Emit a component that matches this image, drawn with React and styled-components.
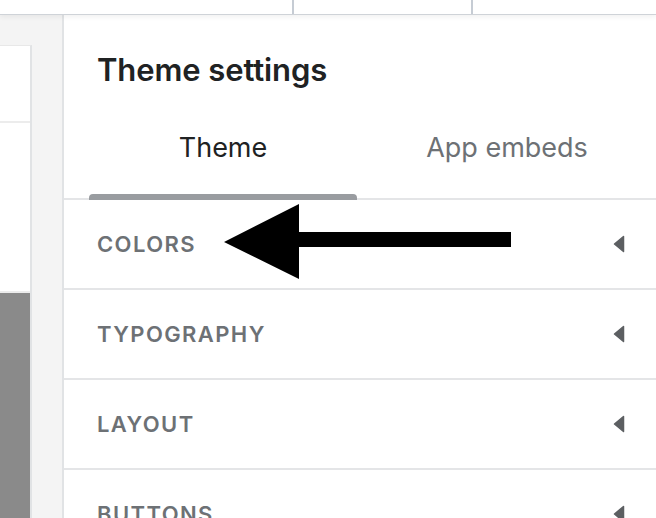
import React from 'react';
import styled, { createGlobalStyle } from 'styled-components';

const GlobalStyle = createGlobalStyle`
  html, body {
    margin: 0;
    padding: 0;
    background: #ffffff;
    overflow: hidden;
  }
  body {
    font-family: Inter, "Noto Sans", "Liberation Sans", sans-serif;
    -webkit-font-smoothing: antialiased;
  }
`;

// whole screen
const Page = styled.div`
  width: 656px;
  height: 518px;
  display: flex;
  flex-direction: column;
  overflow: hidden;
`;

// the strip of the top bar that is still visible
const TopBar = styled.div`
  height: 14px;
  flex-shrink: 0;
  display: flex;
  background: #ffffff;
  border-bottom: 1px solid #cfd3d8;
  box-shadow: 0 2px 5px rgba(0, 0, 0, 0.06);
  position: relative;
  z-index: 1;
`;

const TopSegment = styled.div`
  width: ${p => p.$width ? `${p.$width}px` : 'auto'};
  flex: ${p => p.$width ? '0 0 auto' : '1'};
  border-right: ${p => p.$divider ? '2px solid #c6ccd4' : 'none'};
`;

const Main = styled.div`
  flex: 1;
  display: flex;
  min-height: 0;
`;

// preview area on the left, mostly cut off
const LeftRail = styled.div`
  width: 62px;
  flex-shrink: 0;
  background: #f4f4f4;
  border-right: 2px solid #e1e3e5;
  padding-top: 30px;
  display: flex;
`;

const PreviewCard = styled.div`
  width: 30px;
  display: flex;
  flex-direction: column;
  background: #ffffff;
  border-top: 1px solid #e8e8e8;
  border-right: 2px solid #e1e3e5;
`;

const CardHeader = styled.div`
  height: 75px;
  border-bottom: 2px solid #ececec;
`;

const CardBody = styled.div`
  height: 168px;
  border-bottom: 2px solid #ececec;
`;

const CardImage = styled.div`
  flex: 1;
  background: #8a8a8a;
`;

// settings panel
const Panel = styled.div`
  flex: 1;
  position: relative;
  background: #ffffff;
  display: flex;
  flex-direction: column;
`;

const Title = styled.h2`
  margin: 0;
  padding: 36px 0 0 33px;
  font-size: 31px;
  line-height: 37px;
  font-weight: 600;
  color: #202223;
  letter-spacing: -0.1px;
`;

const Tabs = styled.div`
  display: flex;
  gap: 16px;
  padding: 0 16px 0 25px;
  margin-top: 39px;
  border-bottom: 2px solid #e4e5e7;
`;

const Tab = styled.div`
  width: 268px;
  height: 71px;
  position: relative;
  display: flex;
  justify-content: center;
  padding-top: 5px;
  box-sizing: border-box;
  font-size: 27px;
  line-height: 32px;
  color: ${p => p.$active ? '#202223' : '#6d7175'};

  &::after {
    content: '';
    display: ${p => p.$active ? 'block' : 'none'};
    position: absolute;
    left: 0;
    right: 0;
    bottom: -2px;
    height: 6px;
    border-radius: 4px 4px 0 0;
    background: #999ca0;
  }
`;

const Section = styled.div`
  height: 88px;
  flex-shrink: 0;
  display: flex;
  align-items: center;
  justify-content: space-between;
  padding: 0 32px 0 33px;
  border-bottom: 2px solid #e4e5e7;
`;

const SectionLabel = styled.span`
  font-size: 22px;
  font-weight: 600;
  letter-spacing: 1.4px;
  color: #6d7175;
`;

const Caret = styled.svg`
  width: 12px;
  height: 18px;
  display: block;
`;

// annotation drawn over the panel
const Pointer = styled.svg`
  position: absolute;
  left: 160px;
  top: 189px;
  width: 288px;
  height: 76px;
`;

const sections = ['COLORS', 'TYPOGRAPHY', 'LAYOUT', 'BUTTONS'];

function App() {
  return (
    <>
      <GlobalStyle />
      <Page>
        <TopBar>
          <TopSegment $width={292} $divider />
          <TopSegment $width={177} $divider />
          <TopSegment />
        </TopBar>
        <Main>
          <LeftRail>
            <PreviewCard>
              <CardHeader />
              <CardBody />
              <CardImage />
            </PreviewCard>
          </LeftRail>
          <Panel>
            <Title>Theme settings</Title>
            <Tabs>
              <Tab $active>Theme</Tab>
              <Tab>App embeds</Tab>
            </Tabs>
            {sections.map(name => (
              <Section key={name}>
                <SectionLabel>{name}</SectionLabel>
                <Caret viewBox="0 0 12 18">
                  <path d="M10.5 1.5 L1.5 9 L10.5 16.5 Z" fill="#5c5f62" stroke="#5c5f62" strokeWidth="1.5" strokeLinejoin="round" />
                </Caret>
              </Section>
            ))}
            <Pointer viewBox="0 0 288 76">
              <path d="M0 38 L75 0 L75 28 L287 28 L287 43 L75 43 L75 75 Z" fill="#000000" />
            </Pointer>
          </Panel>
        </Main>
      </Page>
    </>
  );
}

export default App;
